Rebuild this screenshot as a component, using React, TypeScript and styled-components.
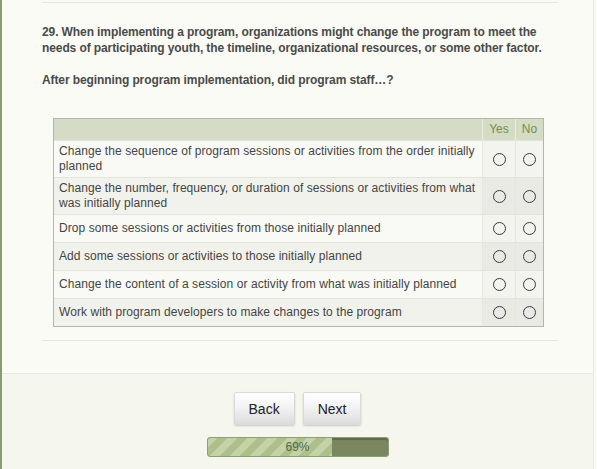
import styled, { createGlobalStyle } from "styled-components";

const GlobalStyle = createGlobalStyle`
  body {
    margin: 0;
    background: #f8f9f2;
    font-family: "Liberation Sans", Arial, sans-serif;
  }
`;

const items = [
  "Change the sequence of program sessions or activities from the order initially planned",
  "Change the number, frequency, or duration of sessions or activities from what was initially planned",
  "Drop some sessions or activities from those initially planned",
  "Add some sessions or activities to those initially planned",
  "Change the content of a session or activity from what was initially planned",
  "Work with program developers to make changes to the program",
];

const progress = 69;

function App() {
  return (
    <Shell>
      <GlobalStyle />
      <Main>
        <QuestionBlock>
          <Prompt>
            29. When implementing a program, organizations might change the program to meet the
            needs of participating youth, the timeline, organizational resources, or some other factor.
          </Prompt>
          <Prompt>After beginning program implementation, did program staff…?</Prompt>
          <Matrix>
            <HeadCell />
            <HeadCell $choice>Yes</HeadCell>
            <HeadCell $choice>No</HeadCell>
            {items.map((label, i) => (
              <MatrixRow key={i} label={label} index={i} />
            ))}
          </Matrix>
        </QuestionBlock>
        <Rule />
      </Main>
      <Footer>
        <ButtonRow>
          <NavButton>Back</NavButton>
          <NavButton>Next</NavButton>
        </ButtonRow>
        <ProgressBar>
          <ProgressFill style={{ width: `${progress}%` }} />
          <ProgressLabel>{progress}%</ProgressLabel>
        </ProgressBar>
      </Footer>
    </Shell>
  );
}

function MatrixRow({ label, index }: { label: string; index: number }) {
  const even = index % 2 === 1;
  return (
    <>
      <TextCell $even={even}>{label}</TextCell>
      <RadioCell $even={even}>
        <Radio type="radio" name={`q29-${index}`} />
      </RadioCell>
      <RadioCell $even={even}>
        <Radio type="radio" name={`q29-${index}`} />
      </RadioCell>
    </>
  );
}

export default App;

const Shell = styled.div`
  width: 594px;
  min-height: 469px;
  box-sizing: border-box;
  border-left: 2px solid #8b9b6f;
  border-right: 1px solid #e6e9dc;
  display: flex;
  flex-direction: column;
`;

const Main = styled.div`
  background: #fafbf5;
  padding: 2px 35px 32px 40px;
  border-bottom: 1px solid #e4e9d8;
`;

const QuestionBlock = styled.div`
  border-top: 1px solid #e5e6de;
  padding-top: 21px;
`;

const Prompt = styled.p`
  margin: 0 0 16px;
  font-size: 12px;
  line-height: 16px;
  font-weight: bold;
  letter-spacing: -0.1px;
  color: #4a4a4a;
`;

const Matrix = styled.div`
  margin: 30px 0 0 11px;
  width: 491px;
  box-sizing: border-box;
  border: 1px solid #b4b6ae;
  display: grid;
  grid-template-columns: 1fr 33px 28px;
`;

const HeadCell = styled.div<{ $choice?: boolean }>`
  height: 21px;
  background: #d4dcc5;
  border-left: ${(p) => (p.$choice ? "1px solid #e9ede0" : "none")};
  color: #7b8b4d;
  font-size: 12px;
  line-height: 21px;
  text-align: center;
`;

const TextCell = styled.div<{ $even: boolean }>`
  display: flex;
  align-items: center;
  min-height: 28px;
  box-sizing: border-box;
  padding: 3px 5px;
  border-top: 1px solid #e2e3dc;
  background: ${(p) => (p.$even ? "#f2f2ed" : "#f9faf5")};
  color: #444;
  font-size: 12px;
  line-height: 15px;
  letter-spacing: 0.07px;
`;

const RadioCell = styled.div<{ $even: boolean }>`
  display: flex;
  align-items: center;
  justify-content: center;
  border-top: 1px solid #e2e3dc;
  border-left: 1px solid #e6e6e0;
  background: ${(p) => (p.$even ? "#e9eae4" : "#f3f4ee")};
`;

const Radio = styled.input`
  appearance: none;
  width: 13px;
  height: 13px;
  margin: 0;
  border: 1px solid #383a44;
  border-radius: 50%;
  background: transparent;
`;

const Rule = styled.div`
  margin-top: 13px;
  border-top: 1px solid #e5e6de;
`;

const Footer = styled.div`
  flex: 1;
  background: #f5f7ee;
  padding-top: 18px;
  display: flex;
  flex-direction: column;
  align-items: center;
  gap: 12px;
`;

const ButtonRow = styled.div`
  display: flex;
  gap: 8px;
`;

const NavButton = styled.button`
  height: 33px;
  padding: 0 14px;
  border: 1px solid #d9d9d6;
  border-radius: 2px;
  background: linear-gradient(#ffffff, #f3f3f3 45%, #dcdcdc);
  box-shadow: 0 1px 2px rgba(0, 0, 0, 0.18);
  color: #222;
  font-family: "Liberation Sans", Arial, sans-serif;
  font-size: 14px;
`;

const ProgressBar = styled.div`
  position: relative;
  width: 182px;
  height: 20px;
  box-sizing: border-box;
  border: 1px solid #8e9d72;
  border-radius: 3px;
  background: #7a8760;
  box-shadow: inset 0 2px 1px #5f6b49;
  overflow: hidden;
`;

const ProgressFill = styled.div`
  height: 100%;
  background: repeating-linear-gradient(
    135deg,
    #c4d2a8 0 7px,
    #adbf8b 7px 14px
  );
`;

const ProgressLabel = styled.span`
  position: absolute;
  inset: 0;
  text-align: center;
  line-height: 18px;
  font-size: 12px;
  color: #56654a;
`;
